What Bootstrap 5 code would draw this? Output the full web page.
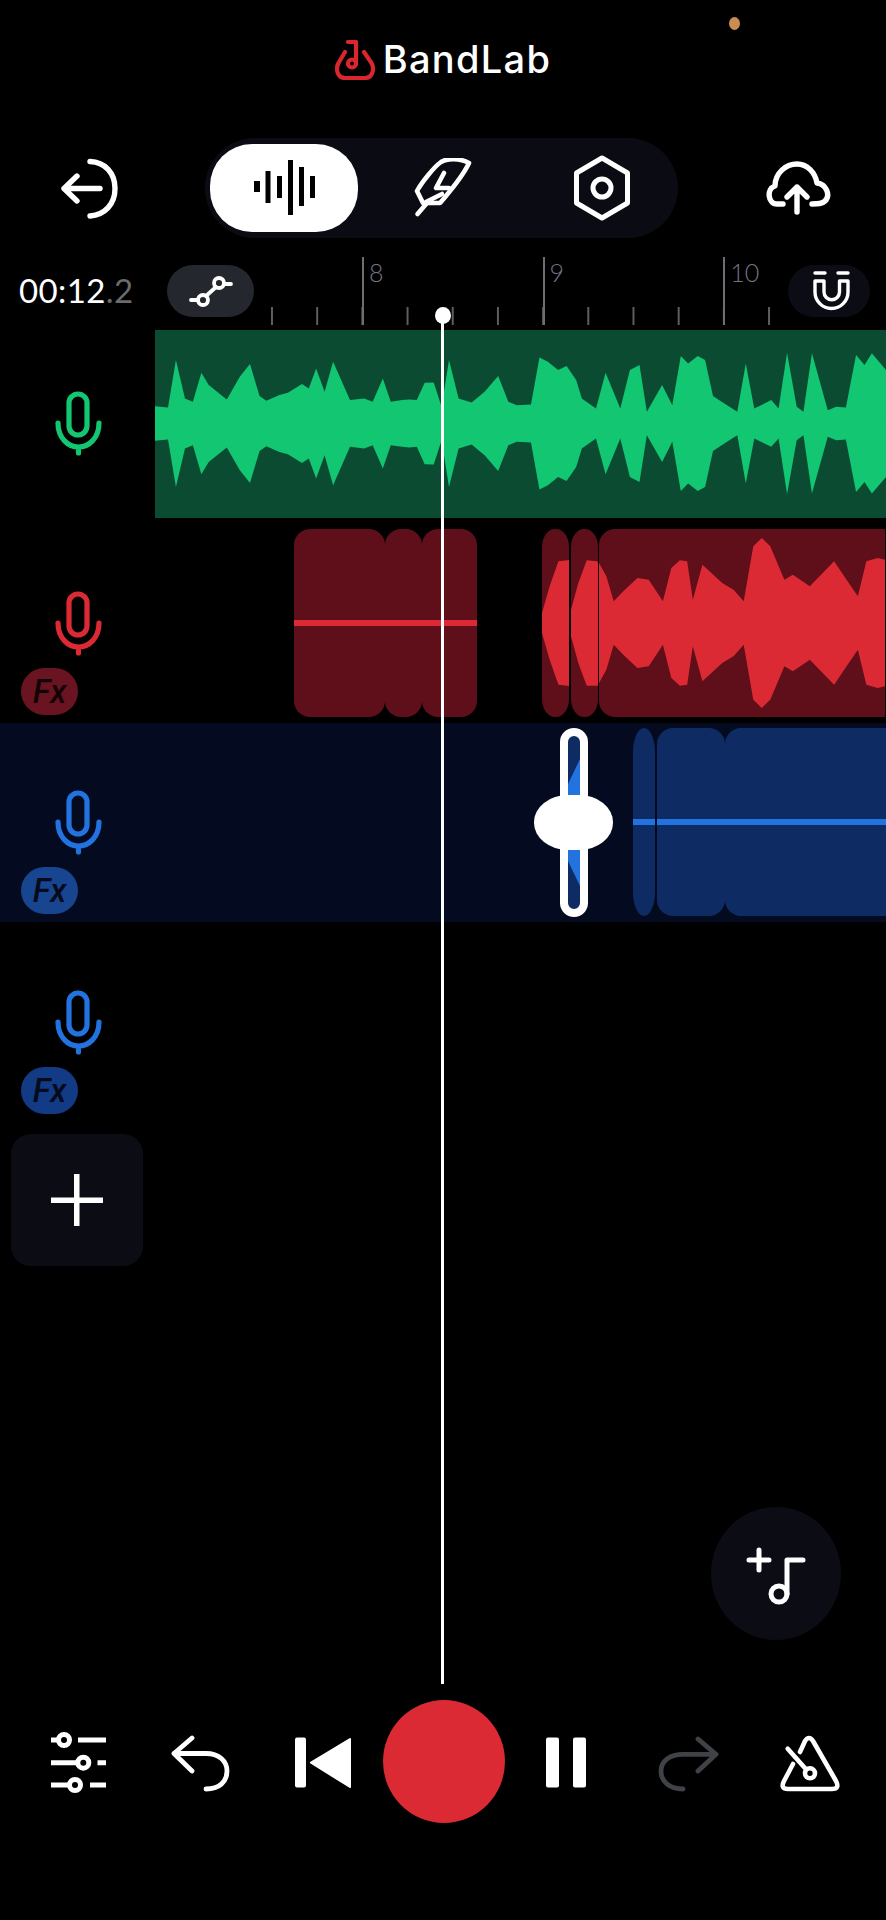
<!DOCTYPE html>
<html lang="en">
<head>
    <meta charset="UTF-8">
    <meta name="viewport" content="width=device-width, initial-scale=1.0">
    <title>BandLab Studio</title>
    <link href="https://cdn.jsdelivr.net/npm/bootstrap@5.3.0/dist/css/bootstrap.min.css" rel="stylesheet">
    <style>
        body { margin: 0; background: #000; font-family: "Lato", "Liberation Sans", sans-serif; }
        svg { display: block; flex: none; }
        .ico { fill: none; stroke: #fff; stroke-linecap: round; stroke-linejoin: round; }
        .ico-green { stroke: #12c672; }
        .ico-red { stroke: #dc2a35; }
        .ico-blue { stroke: #2273e0; }
        .ico-dim { stroke: #3f4247; }
        .ico-butt { stroke-linecap: butt; }
        .studio { width: 886px; height: 1920px; overflow: hidden; background: #000; }

        /* header */
        .top-logo { padding-top: 40px; height: 138px; gap: 8px; }
        .logo-name { font-family: "Inter", sans-serif; font-weight: 500; font-size: 38px; line-height: 39px; color: #fff; letter-spacing: 1.3px; }
        .rec-dot { left: 729px; top: 17px; width: 11px; height: 13px; border-radius: 50%; background: #c98d52; }

        /* view switcher */
        .tool-row { height: 100px; padding-left: 55px; }
        .view-pill { margin-left: 80px; margin-right: 82px; width: 473px; height: 100px; padding: 6px 0 6px 5px; border-radius: 50px; background: #0b0c13; }
        .view-btn { height: 88px; padding: 0; border: 0; border-radius: 42px; }
        .view-on { width: 148px; background: #fff; }
        .view-mid { width: 170px; }
        .view-end { width: 148px; }

        /* time and ruler */
        .time-row { height: 68px; margin-top: 19px; margin-bottom: 5px; }
        .time-read { width: 167px; padding-left: 19px; padding-bottom: 2px; font-size: 33px; line-height: 36px; letter-spacing: .4px; color: #fff; }
        .time-read span { color: #6b6b6b; }
        .round-tool { width: 87px; height: 52px; padding: 0; border: 0; border-radius: 26px; background: #25272e; }
        .round-dark { width: 82px; background: #0c0d14; }
        .ruler { width: 534px; height: 68px; padding-left: 108px;
            background: linear-gradient(to right, #5e5e64 2px, transparent 2px) 17px bottom / 45.2px 18px repeat-x; }
        .bar-mark { width: 181px; height: 68px; padding-left: 5px; border-left: 2px solid #6d6d73; font-size: 25px; line-height: 30px; color: #737583; font-weight: 300; }
        .bar-last { width: 65px; }

        /* tracks */
        .trk { height: 188px; }
        .trk-gap-a { margin-bottom: 11px; }
        .trk-gap-b { margin-bottom: 6px; }
        .trk-sel { height: 199px; background: #040b20; }
        .trk-last { height: 212px; }
        .trk-head { width: 155px; }
        .pad-a { padding-top: 60px; }
        .pad-b { padding-top: 61px; }
        .pad-c { padding-top: 66px; }
        .pad-d { padding-top: 67px; }
        .mic { margin-left: 53px; }
        .fx-tag { margin: 12px 0 0 21px; width: 57px; height: 47px; border-radius: 24px; font-family: "Roboto", sans-serif; font-weight: 500; font-style: italic; font-size: 33px; line-height: 47px; text-align: center; }
        .fx-red { background: #6a1422; color: #140306; }
        .fx-blue { background: #17458f; color: #050a1c; }
        .fx-navy { background: #133a85; color: #050a1c; }
        .lane { width: 731px; height: 188px; }
        .lane-green { background: #0a4b32; }
        .lane-sel { padding-top: 5px; height: 194px; }
        .wave { width: 100%; height: 100%; }
        .clip { height: 188px; flex: none; }
        .clip-red { background: #5e0f1a; border-radius: 16px; }
        .clip-blue { background: #0e2b63; border-radius: 16px; }
        .clip-open { border-radius: 16px 0 0 16px; }
        .flat { height: 6px; width: 100%; background: #dc2a35; }
        .flat-blue { height: 6px; background: #2273e0; }
        .r1 { width: 91px; margin-left: 139px; }
        .r2 { width: 37px; }
        .r3 { width: 55px; }
        .r4 { width: 27px; margin-left: 65px; border-radius: 13px / 18px; }
        .r5 { width: 27px; margin-left: 2px; border-radius: 13px / 18px; }
        .r6 { width: 286px; margin-left: 1px; }
        .b1 { width: 22px; margin-left: 478px; border-radius: 11px / 24px; }
        .b2 { width: 68px; margin-left: 2px; }
        .b3 { width: 161px; }

        /* trim handle on the selected clip */
        .trim-bar { left: 405px; top: 5px; width: 28px; height: 189px; border: 8px solid #fff; border-radius: 14px; background: #0e2b63; overflow: hidden; }
        .trim-knob { left: 379px; top: 72px; width: 79px; height: 55px; border-radius: 34px / 27px; background: #fff; }

        .add-track { margin-left: 11px; width: 132px; height: 132px; padding: 0; border: 0; border-radius: 20px; background: #0c0d14; }

        /* floating and transport */
        .note-fab { left: 711px; top: 1507px; width: 130px; height: 133px; padding: 0; border: 0; background: #0c0d14; }
        .playhead { left: 441px; top: 315px; width: 3px; height: 1369px; background: #fff; }
        .playhead-dot { left: 434.5px; top: 307px; width: 16px; height: 17px; background: #fff; }
        .transport { padding-left: 17px; margin-bottom: 97px; height: 123px; }
        .trans-cell { width: 122px; height: 123px; }
        .rec-btn { width: 122px; height: 123px; background: #dc2a35; }
    </style>
</head>
<body>
<div class="studio position-relative d-flex flex-column">

    <div class="top-logo d-flex justify-content-center align-items-start">
        <svg width="40" height="40" viewBox="0 0 40 40" fill="none" stroke="#d9262f" stroke-width="4.2" stroke-linecap="round" stroke-linejoin="round">
            <path d="M10 12L3.5 23C0 30 3 38 10 38H30C37 38 40 30 36.5 23L29 12"/>
            <path d="M13 2H21V23"/>
            <circle cx="17" cy="23.5" r="4"/>
        </svg>
        <div class="logo-name">BandLab</div>
    </div>
    <div class="rec-dot position-absolute"></div>

    <div class="tool-row d-flex align-items-center">
        <svg class="ico" width="70" height="75" viewBox="0 0 70 75" stroke-width="5.4">
            <path d="M35 10.5C50 11 60 22 60 37.5C60 53 50 64 35 65"/>
            <path d="M45 37.5H9M22 25L9 37.5L22 50"/>
        </svg>
        <div class="view-pill d-flex">
            <button class="btn view-btn view-on d-flex align-items-center justify-content-center">
                <svg width="61" height="56" viewBox="0 0 61 56" fill="#000">
                    <rect x="0" y="21" width="6" height="11"/>
                    <rect x="11.5" y="11" width="5" height="32"/>
                    <rect x="23" y="16" width="5" height="22"/>
                    <rect x="34" y="0" width="5" height="55"/>
                    <rect x="45" y="7" width="5" height="39"/>
                    <rect x="56" y="16" width="5" height="22"/>
                </svg>
            </button>
            <button class="btn view-btn view-mid d-flex align-items-center justify-content-center">
                <svg class="ico" width="58" height="60" viewBox="0 0 58 60" stroke-width="4.6">
                    <path d="M55 5C46 0 33 0 27 4C20 9 8 24 3 33L9 45H26C36 33 48 20 55 5Z"/>
                    <path d="M30 15L22 30H35M12 44L28 36M13 45L3.5 56"/>
                </svg>
            </button>
            <button class="btn view-btn view-end d-flex align-items-center justify-content-center">
                <svg class="ico" width="64" height="76" viewBox="0 0 64 76" stroke-width="5">
                    <path d="M32 8L57.5 23V53L32 68L6.5 53V23Z"/>
                    <circle cx="32" cy="38" r="9"/>
                </svg>
            </button>
        </div>
        <svg class="ico" width="72" height="54" viewBox="0 0 72 54" stroke-width="5.4">
            <path d="M23 43H17C8 43 6 28 15 25C15 12 26 3 37 3C47 3 55 11 57 22C66 23 71 34 65 40C62 43 58 43 52 43"/>
            <path d="M37 51V26M27 36L37 26L47 36"/>
        </svg>
    </div>

    <div class="time-row d-flex align-items-center">
        <div class="time-read">00:12<span>.2</span></div>
        <button class="btn round-tool d-flex align-items-center justify-content-center">
            <svg class="ico" width="44" height="34" viewBox="0 0 44 34" stroke-width="3.8">
                <circle cx="30" cy="9" r="5"/>
                <circle cx="14" cy="26" r="5"/>
                <path d="M27 13L17 22M35 10H42M2 26H9"/>
            </svg>
        </button>
        <div class="ruler d-flex">
            <div class="bar-mark flex-none">8</div>
            <div class="bar-mark flex-none">9</div>
            <div class="bar-mark bar-last flex-none">10</div>
        </div>
        <button class="btn round-tool round-dark d-flex align-items-center justify-content-center">
            <svg class="ico" width="43" height="44" viewBox="-2 0 43 44" stroke-width="3.4">
                <path d="M5 4H15M28 4H38"/>
                <path d="M5 12H14V23A7.75 7.75 0 0 0 29.5 23V12H38V23A16.5 16.5 0 0 1 5 23Z"/>
            </svg>
        </button>
    </div>

    <!-- green vocal track -->
    <div class="trk trk-gap-a d-flex">
        <div class="trk-head pad-a">
            <svg class="mic ico ico-green" width="50" height="66" viewBox="0 0 50 66" stroke-width="5.2">
                <rect x="16" y="4" width="18" height="41" rx="9"/>
                <path d="M5 33C5 48 15 57 25.5 57C36 57 46 48 46 33M25.5 57V63"/>
            </svg>
        </div>
        <div class="lane lane-green">
            <svg class="wave" viewBox="275 30 1293 563" preserveAspectRatio="none" fill="#12c672">
                <path id="greenWave" d="M275 315L275 258L298 262L312 120L328 235L342 245L357 158L370 195L402 238L425 170L443 132L460 228L472 242L495 225L510 218L535 192L547 205L560 145L575 215L590 125L620 240L645 235L660 245L678 175L692 245L712 240L725 238L738 240L752 188L768 187L782 260L795 120L812 235L835 247L858 215L882 168L900 245L915 255L940 253L955 112L970 125L988 150L1003 138L1020 180L1030 235L1055 265L1072 158L1098 265L1115 150L1132 135L1145 275L1172 195L1190 255L1205 108L1218 130L1235 108L1248 120L1262 228L1280 248L1305 275L1320 130L1335 265L1365 240L1378 265L1393 98L1410 260L1422 275L1437 100L1465 270L1480 260L1497 262L1515 105L1530 135L1543 100L1568 150L1568 315Z"/>
                <use href="#greenWave" transform="matrix(1 0 0 -1 0 620)"/>
            </svg>
        </div>
    </div>

    <!-- red track -->
    <div class="trk trk-gap-b d-flex">
        <div class="trk-head pad-b">
            <svg class="mic ico ico-red" width="50" height="66" viewBox="0 0 50 66" stroke-width="5.2">
                <rect x="16" y="4" width="18" height="41" rx="9"/>
                <path d="M5 33C5 48 15 57 25.5 57C36 57 46 48 46 33M25.5 57V63"/>
            </svg>
            <div class="fx-tag fx-red">Fx</div>
        </div>
        <div class="lane d-flex">
            <div class="clip clip-red r1 d-flex align-items-center"><div class="flat"></div></div>
            <div class="clip clip-red r2 d-flex align-items-center"><div class="flat"></div></div>
            <div class="clip clip-red r3 d-flex align-items-center"><div class="flat"></div></div>
            <div class="clip clip-red r4 overflow-hidden">
                <svg class="wave" viewBox="962 628 46 564" preserveAspectRatio="none" fill="#dc2a35">
                    <path d="M962 880L975 800L990 725L1005 722L1008 720L1008 1100L1005 1098L990 1095L975 1020L962 940Z"/>
                </svg>
            </div>
            <div class="clip clip-red r5 overflow-hidden">
                <svg class="wave" viewBox="1012 628 48 564" preserveAspectRatio="none" fill="#dc2a35">
                    <path d="M1012 870L1025 790L1040 722L1058 725L1060 728L1060 1098L1040 1098L1025 1030L1012 950Z"/>
                </svg>
            </div>
            <div class="clip clip-red clip-open r6 overflow-hidden">
                <svg class="wave" viewBox="1062 628 506 564" preserveAspectRatio="none" fill="#dc2a35">
                    <path id="redWave" d="M1062 915L1062 730L1075 770L1088 845L1105 815L1130 775L1150 780L1175 845L1190 745L1205 722L1218 725L1228 840L1245 735L1280 790L1300 810L1318 845L1335 680L1350 655L1365 680L1390 780L1405 765L1435 800L1478 725L1500 780L1520 830L1535 725L1555 715L1568 720L1568 915Z"/>
                    <use href="#redWave" transform="matrix(1 0 0 -1 0 1820)"/>
                </svg>
            </div>
        </div>
    </div>

    <!-- selected blue track -->
    <div class="trk-sel d-flex">
        <div class="trk-head pad-c">
            <svg class="mic ico ico-blue" width="50" height="66" viewBox="0 0 50 66" stroke-width="5.2">
                <rect x="16" y="4" width="18" height="41" rx="9"/>
                <path d="M5 33C5 48 15 57 25.5 57C36 57 46 48 46 33M25.5 57V63"/>
            </svg>
            <div class="fx-tag fx-blue">Fx</div>
        </div>
        <div class="lane lane-sel position-relative d-flex">
            <div class="clip clip-blue b1 d-flex align-items-center"><div class="flat flat-blue"></div></div>
            <div class="clip clip-blue b2 d-flex align-items-center"><div class="flat flat-blue"></div></div>
            <div class="clip clip-blue clip-open b3 d-flex align-items-center"><div class="flat flat-blue"></div></div>
            <div class="trim-bar position-absolute">
                <svg class="wave" viewBox="0 0 12 173" preserveAspectRatio="none" fill="#2273e0">
                    <path d="M12 23L0 48V62H12ZM0 110V125L12 150V110Z"/>
                </svg>
            </div>
            <div class="trim-knob position-absolute"></div>
        </div>
    </div>

    <!-- empty blue track -->
    <div class="trk-last d-flex">
        <div class="trk-head pad-d">
            <svg class="mic ico ico-blue" width="50" height="66" viewBox="0 0 50 66" stroke-width="5.2">
                <rect x="16" y="4" width="18" height="41" rx="9"/>
                <path d="M5 33C5 48 15 57 25.5 57C36 57 46 48 46 33M25.5 57V63"/>
            </svg>
            <div class="fx-tag fx-navy">Fx</div>
        </div>
    </div>

    <div>
        <button class="btn add-track d-flex align-items-center justify-content-center">
            <svg width="52" height="52" viewBox="0 0 52 52" fill="#fff">
                <rect x="0" y="23.5" width="52" height="5.5"/>
                <rect x="23" y="0" width="5.5" height="52"/>
            </svg>
        </button>
    </div>

    <button class="btn note-fab position-absolute rounded-circle d-flex align-items-center justify-content-center">
        <svg class="ico" width="70" height="70" viewBox="0 0 70 70" stroke-width="5">
            <path d="M8 21H28M18 11V31"/>
            <path d="M62 21H46V55"/>
            <circle cx="38" cy="55" r="8"/>
        </svg>
    </button>

    <div class="playhead position-absolute"></div>
    <div class="playhead-dot position-absolute rounded-circle"></div>

    <div class="transport d-flex align-items-center mt-auto">
        <div class="trans-cell d-flex align-items-center justify-content-center">
            <svg class="ico ico-butt" width="56" height="62" viewBox="0 0 56 62" stroke-width="5">
                <path d="M1 9H8.5M28 9H56M1 31.7H27M47.5 31.7H56M1 54H18.5M40 54H56"/>
                <circle cx="14" cy="9" r="5.5"/>
                <circle cx="33.3" cy="31.7" r="5.5"/>
                <circle cx="25" cy="54" r="5.5"/>
            </svg>
        </div>
        <div class="trans-cell d-flex align-items-center justify-content-center">
            <svg class="ico" width="62" height="62" viewBox="0 0 62 62" stroke-width="4.8">
                <path d="M23 7L5 22.5L23 40M5 22.5H37C50 22.5 58 30 58 40C58 51 50 58 37 58"/>
            </svg>
        </div>
        <div class="trans-cell d-flex align-items-center justify-content-center">
            <svg width="65" height="62" viewBox="0 0 65 62" fill="#fff">
                <rect x="5" y="6.5" width="11" height="50" rx="2"/>
                <path d="M60 8L21 31.7L60 56Z" stroke="#fff" stroke-width="2" stroke-linejoin="round"/>
            </svg>
        </div>
        <div class="trans-cell d-flex align-items-center justify-content-center">
            <button class="btn rec-btn rounded-circle p-0 border-0" aria-label="Record"></button>
        </div>
        <div class="trans-cell d-flex align-items-center justify-content-center">
            <svg width="40" height="62" viewBox="0 0 40 62" fill="#fff">
                <rect x="0" y="6.5" width="13" height="50" rx="2"/>
                <rect x="27" y="6.5" width="13" height="50" rx="2"/>
            </svg>
        </div>
        <div class="trans-cell d-flex align-items-center justify-content-center">
            <svg class="ico ico-dim" width="71" height="62" viewBox="0 0 71 62" stroke-width="4.8">
                <path d="M45 8L63 23.3L45 40M63 23.3H30C17 23.3 8 30 8 40C8 51 17 58 30 58"/>
            </svg>
        </div>
        <div class="trans-cell d-flex align-items-center justify-content-center">
            <svg class="ico" width="68" height="62" viewBox="0 0 68 62" stroke-width="4.6">
                <path d="M24 21L29 10Q33 4 37 10L60 50Q64 58 56 58H12Q4 58 8 50L17 33"/>
                <path d="M11.7 17.7L30 38.3"/>
                <circle cx="34" cy="42.3" r="5"/>
            </svg>
        </div>
    </div>
</div>
<script src="https://cdn.jsdelivr.net/npm/bootstrap@5.3.0/dist/js/bootstrap.bundle.min.js"></script>
</body>
</html>
